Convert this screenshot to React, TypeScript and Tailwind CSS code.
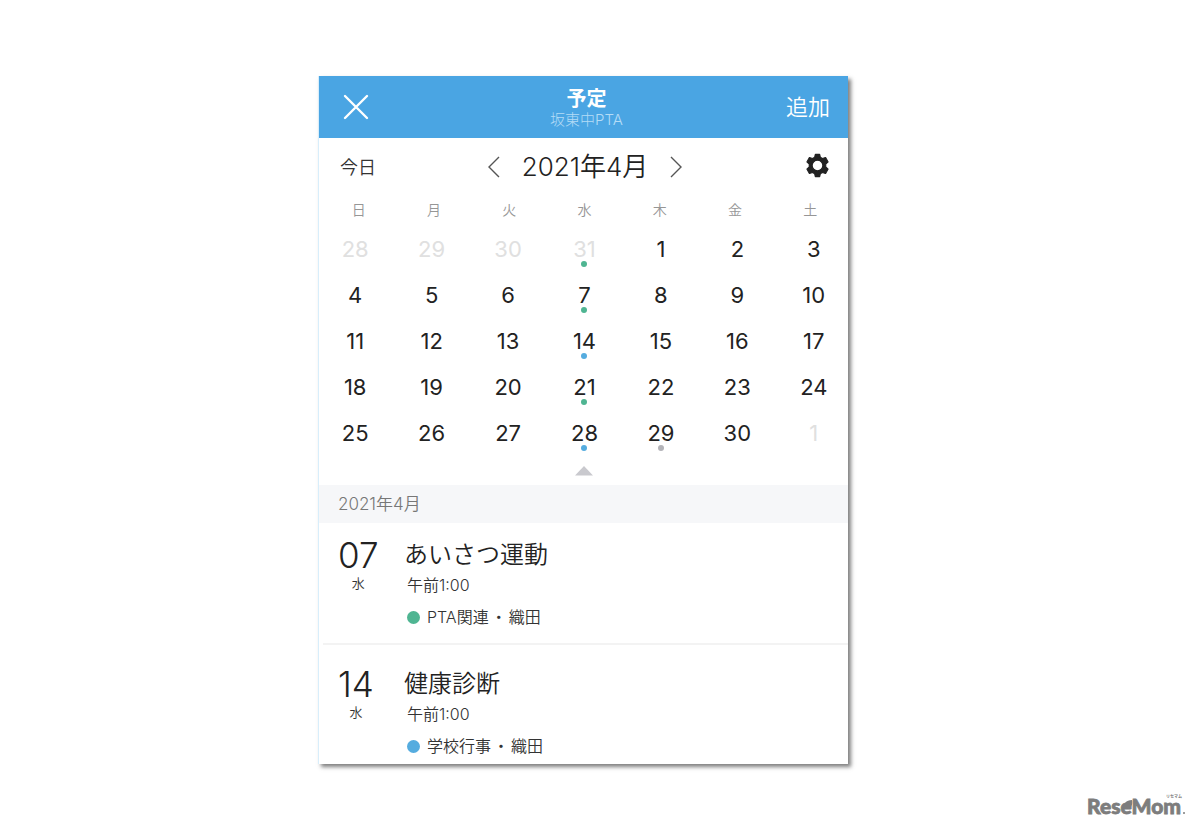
import React from "react";

type Dot = "green" | "blue" | "gray";
type Day = { n: number; muted?: boolean; dot?: Dot };

const dotColor: Record<Dot, string> = {
  green: "bg-[#4fb592]",
  blue: "bg-[#55acdf]",
  gray: "bg-[#b3b3b8]",
};

const weekdays = ["日", "月", "火", "水", "木", "金", "土"];

const dots: Record<number, Dot> = { 7: "green", 14: "blue", 21: "green", 28: "blue", 29: "gray" };

const days: Day[] = [
  { n: 28, muted: true },
  { n: 29, muted: true },
  { n: 30, muted: true },
  { n: 31, muted: true, dot: "green" },
  ...Array.from({ length: 30 }, (_, i) => ({ n: i + 1, dot: dots[i + 1] })),
  { n: 1, muted: true },
];

const weeks = [0, 1, 2, 3, 4].map((w) => days.slice(w * 7, w * 7 + 7));

const events = [
  { day: "07", weekday: "水", title: "あいさつ運動", time: "午前1:00", dot: "green" as Dot, tag: "PTA関連", owner: "織田" },
  { day: "14", weekday: "水", title: "健康診断", time: "午前1:00", dot: "blue" as Dot, tag: "学校行事", owner: "織田" },
];

function Header() {
  return (
    <header className="grid h-[62px] grid-cols-[1fr_auto_1fr] items-center bg-[#4aa5e3] pr-[18px] pl-6 text-white">
      <button type="button" aria-label="閉じる" className="justify-self-start">
        <svg width="26" height="26" viewBox="0 0 26 26" fill="none" stroke="currentColor" strokeWidth="2.4" strokeLinecap="round">
          <path d="M2 2L24 24M24 2L2 24" />
        </svg>
      </button>
      <div className="pt-0.5 text-center">
        <h1 className="text-[20px] leading-6 font-bold">予定</h1>
        <p className="text-[15px] leading-[18px] font-light text-[#b4dcf6]">坂東中PTA</p>
      </div>
      <button type="button" className="justify-self-end text-[22px] leading-8">
        追加
      </button>
    </header>
  );
}

function MonthBar() {
  return (
    <div className="grid h-14 grid-cols-[1fr_auto_1fr] items-center pt-0.5 pr-[18px] pl-[21px]">
      <button type="button" className="justify-self-start text-[18px] text-[#333]">
        今日
      </button>
      <div className="flex items-center gap-[21px]">
        <button type="button" aria-label="前の月">
          <svg width="14" height="22" viewBox="0 0 14 22" fill="none" stroke="#555" strokeWidth="1.4">
            <path d="M12 1L2 11L12 21" />
          </svg>
        </button>
        <h2 className="text-[26px] leading-10">2021年4月</h2>
        <button type="button" aria-label="次の月">
          <svg width="14" height="22" viewBox="0 0 14 22" fill="none" stroke="#555" strokeWidth="1.4">
            <path d="M2 1L12 11L2 21" />
          </svg>
        </button>
      </div>
      <button type="button" aria-label="設定" className="-mt-1 justify-self-end">
        <svg width="25" height="25" viewBox="1.500 1.500 21 21" fill="#222">
          <path
            fillRule="evenodd"
            stroke="#222"
            strokeWidth="1"
            strokeLinejoin="round"
            d="M10.200 2.600h3.600l.6 2.500 1.700 1 2.700-.8 2.100 3.700-2 1.900v2.200l2 1.900-2.100 3.700-2.700-.8-1.700 1-.6 2.500h-3.600l-.6-2.500-1.700-1-2.700.8L3.100 15l2-1.900v-2.200l-2-1.900 2.100-3.700 2.700.8 1.700-1zM12 7.500a4.500 4.500 0 1 0 0 9 4.500 4.500 0 0 0 0-9z"
          />
        </svg>
      </button>
    </div>
  );
}

function Calendar() {
  return (
    <div className="pb-[9px]">
      <table className="-ml-0.5 block w-[calc(100%+6px)]">
        <thead className="block">
          <tr className="grid grid-cols-7 px-1">
            {weekdays.map((d) => (
              <th key={d} scope="col" className="py-1 text-[14px] leading-6 font-[350] text-[#969696]">
                {d}
              </th>
            ))}
          </tr>
        </thead>
        <tbody className="block">
          {weeks.map((week, w) => (
            <tr key={w} className="grid h-[46px] grid-cols-7">
              {week.map((d, i) => (
                <td key={i} className="flex flex-col items-center pt-[11px]">
                  <button type="button" className={d.muted ? "text-[22px] leading-6 font-normal text-[#e0e0e0]" : "text-[22px] leading-6 font-normal"}>
                    {d.n}
                  </button>
                  {d.dot && <span className={`size-1.5 rounded-full ${dotColor[d.dot]}`} />}
                </td>
              ))}
            </tr>
          ))}
        </tbody>
      </table>
      <button type="button" aria-label="カレンダーを閉じる" className="mx-auto mt-2.5 block">
        <svg width="20" height="10" viewBox="0 0 20 10" fill="#c9c9ce">
          <path d="M10 0L19 9.500H1Z" />
        </svg>
      </button>
    </div>
  );
}

function EventList() {
  return (
    <section>
      <h3 className="bg-[#f6f7f9] px-[19px] text-[17px] leading-[38px] text-[#777]">2021年4月</h3>
      <ul className="ml-1 divide-y-2 divide-[#f3f3f3]">
        {events.map((e) => (
          <li key={e.day} className="flex pt-[19px] pb-3.5 first:pt-3 last:pb-1.5">
            <div className="ml-[15px] w-[66px]">
              <div className="flex w-fit flex-col items-center">
                <span className="text-[35px] leading-10 font-light">{e.day}</span>
                <span className="text-[13px] leading-4 text-[#333]">{e.weekday}</span>
              </div>
            </div>
            <div className="flex flex-col">
              <h4 className="text-[24px] leading-10">{e.title}</h4>
              <p className="ml-[3px] text-[16px] leading-5 text-[#333]">{e.time}</p>
              <p className="mt-2.5 ml-[3px] flex items-center text-[16px] leading-6 text-[#333]">
                <span className={`mr-[7px] size-[13px] rounded-full ${dotColor[e.dot]}`} />
                <span>{e.tag}</span>
                <span className="mx-0.5">・</span>
                <span>{e.owner}</span>
              </p>
            </div>
          </li>
        ))}
      </ul>
    </section>
  );
}

function Logo() {
  return (
    <svg width="100" height="30" viewBox="0 -4 100 30" role="img" aria-label="ReseMom">
      <text x="1" y="18" fontFamily="Lato, 'Liberation Sans', sans-serif" fontWeight="900" fontSize="21" fill="#7d7d7d" stroke="#7d7d7d" strokeWidth="0.8">
        ReseMom
      </text>
      <path d="M37 13C37 8 40 4 46 4C47 9 45 13 41 13Z" fill="#7d7d7d" />
      <text x="80" y="2" fontFamily="'Noto Sans CJK JP', sans-serif" fontWeight="700" fontSize="4" fill="#7d7d7d">
        リセマム
      </text>
      <circle cx="98" cy="17" r="1" fill="#7d7d7d" />
    </svg>
  );
}

export default function App() {
  return (
    <div className="flex min-h-screen flex-col bg-white pt-[76px] font-[Inter,'Noto_Sans_CJK_JP',sans-serif] text-[#222]">
      <main className="flex justify-center pr-8">
        <article lang="ja" className="w-full max-w-[530px] border-l border-[#d8eefb] bg-white font-[350] shadow-[3px_3px_4px_rgba(0,0,0,0.5)]">
          <Header />
          <MonthBar />
          <Calendar />
          <EventList />
        </article>
      </main>
      <footer className="mt-auto flex justify-end pr-3 pb-1.5">
        <Logo />
      </footer>
    </div>
  );
}
